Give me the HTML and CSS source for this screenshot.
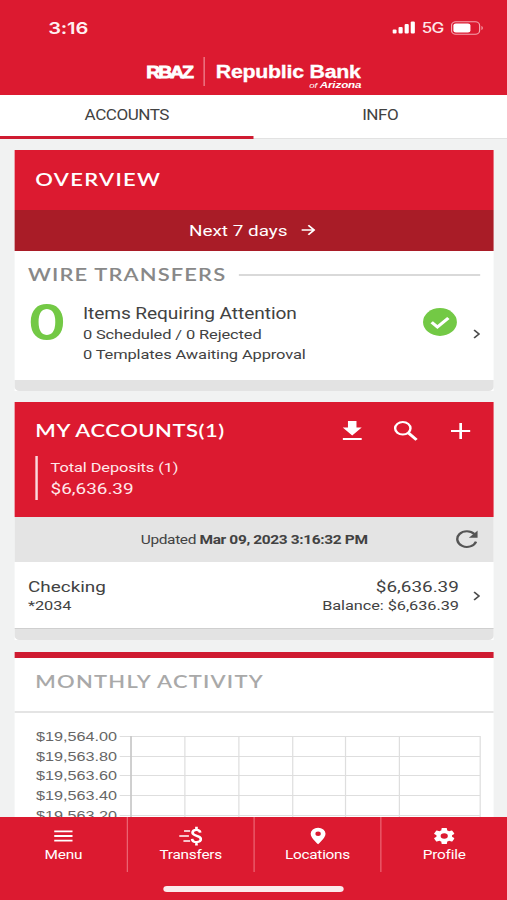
FILE: index.html
```html
<!DOCTYPE html>
<html lang="en">
<head>
<meta charset="utf-8">
<title>Republic Bank of Arizona</title>
<link rel="stylesheet" href="styles.css">
</head>
<body>
<div class="screen">
  <header class="top">
    <div class="status">
      <span class="time">3:16</span>
      <div class="status-right">
        <svg class="signal" width="19" height="13" viewBox="0 0 19 13"><rect x="0" y="8.5" width="3.4" height="4" rx="1"/><rect x="5" y="6" width="3.4" height="6.5" rx="1"/><rect x="10" y="3" width="3.4" height="9.5" rx="1"/><rect x="15" y="0.5" width="3.4" height="12" rx="1"/></svg>
        <span class="net">5G</span>
        <svg class="battery" width="27" height="14" viewBox="0 0 27 14"><rect x=".5" y=".8" width="23" height="12.4" rx="3.5" fill="none" stroke="#f4a5ae"/><rect x="2" y="2.5" width="14" height="9" rx="2" fill="#fff"/><path d="M25 5v4c1.500-.4 1.500-3.600 0-4z" fill="#f4a5ae"/></svg>
      </div>
    </div>
    <div class="brand">
      <span class="brand-short">RBAZ</span>
      <div class="brand-full">
        <span class="brand-name">Republic Bank</span>
        <span class="brand-sub"><small>of</small> Arizona</span>
      </div>
    </div>
  </header>
  <nav class="tabs">
    <a class="tab active">ACCOUNTS</a>
    <a class="tab">INFO</a>
  </nav>
  <main class="content">
    <section class="card">
      <h2 class="overview-title">OVERVIEW</h2>
      <div class="range"><span>Next 7 days</span>
        <svg width="12" height="12" viewBox="0 0 12 12" fill="none" stroke="#fff" stroke-width="1.600"><path d="M.5 6h10M6 1.300L10.700 6 6 10.700"/></svg>
      </div>
      <div class="wire">
        <div class="wire-head"><h3>WIRE TRANSFERS</h3><span class="rule"></span></div>
        <div class="wire-row">
          <span class="count">0</span>
          <div class="wire-text">
            <p class="lead">Items Requiring Attention</p>
            <p class="s1">0 Scheduled / 0 Rejected</p>
            <p class="s2">0 Templates Awaiting Approval</p>
          </div>
          <svg class="ok" width="28" height="28" viewBox="0 0 28 28"><circle cx="14" cy="14" r="13.900" fill="#73c945"/><path d="M7.200 14.300l4.700 4.700 9-9" fill="none" stroke="#fff" stroke-width="2.800"/></svg>
          <svg class="chev" width="6" height="10" viewBox="0 0 6 10"><path d="M1 1l4 4-4 4"/></svg>
        </div>
      </div>
      <div class="foot"></div>
    </section>

    <section class="card accounts">
      <div class="acc-head">
        <div class="acc-bar">
          <h2>MY ACCOUNTS(1)</h2>
          <svg class="i-down" width="16" height="20" viewBox="0 0 16 20" fill="#fff"><path d="M4.500 0h7v6.500h4.300L8 14.500.2 6.500h4.300zM.2 17h15.600v2H.2z"/></svg>
          <svg class="i-search" width="20" height="20" viewBox="0 0 20 20" fill="none" stroke="#fff"><circle cx="7.500" cy="7.300" r="6.300" stroke-width="2"/><path d="M12.200 12l6.600 6.800" stroke-width="2.600"/></svg>
          <svg class="i-plus" width="16" height="16" viewBox="0 0 16 16" stroke="#fff" stroke-width="2.200"><path d="M8 0v16M0 8h16"/></svg>
        </div>
        <div class="total"><p class="t1">Total Deposits (1)</p><p class="t2">$6,636.39</p></div>
      </div>
      <div class="updated"><span>Updated <b>Mar 09, 2023 3:16:32 PM</b></span>
        <svg class="i-refresh" width="18" height="18" viewBox="0 0 18 18"><path d="M15.200 4A7.900 7.900 0 1 0 16.600 11.600" fill="none" stroke="#555" stroke-width="2"/><path d="M18 .5v7.300h-7.300z" fill="#555"/></svg>
      </div>
      <div class="account">
        <div><p class="a1">Checking</p><p class="a2">*2034</p></div>
        <div class="amounts"><p class="a3">$6,636.39</p><p class="a4">Balance: $6,636.39</p></div>
        <svg class="chev" width="6" height="10" viewBox="0 0 6 10"><path d="M1 1l4 4-4 4"/></svg>
      </div>
      <div class="foot"></div>
    </section>

    <section class="card monthly">
      <h2>MONTHLY ACTIVITY</h2>
      <div class="chart">
        <div class="ticks"><span>$19,564.00</span><span>$19,563.80</span><span>$19,563.60</span><span>$19,563.40</span><span>$19,563.20</span></div>
        <svg class="grid" width="297" height="100" viewBox="0 0 297 100"><g stroke="#dedede" stroke-width="1"><path d="M0 .5h296.500M0 20.500h296.500M0 39.500h296.500M0 59.500h296.500M0 79.500h296.500M53.700 0v100M98 0v100M142.200 0v100M185.500 0v100M229.700 0v100M296 0v100"/></g><path d="M9.500 0v100" stroke="#c8c8c8" stroke-width="1.400"/></svg>
      </div>
    </section>
  </main>
  <nav class="bottom">
    <div class="items">
      <a><svg width="16" height="20" viewBox="0 0 16 20" stroke="#fff" stroke-width="1.800"><path d="M.5 5.300h15M.5 10h15M.5 14.700h15"/></svg><span>Menu</span></a>
      <a><svg width="19" height="20" viewBox="0 0 19 20" fill="none" stroke="#fff"><path d="M4 5h5M0 10h8M3.500 15h5.500" stroke-width="1.700"/><path d="M17.300 6.700C17 4.500 15.700 3.900 14.200 3.900c-2 0-3.200 1-3.200 2.800 0 3.800 6.800 2.500 6.800 6.400 0 1.900-1.500 3-3.500 3-2.200 0-3.500-1.100-3.700-3.300M14.200 .8v3.300M14.200 16v3.400" stroke-width="2.200"/></svg><span>Transfers</span></a>
      <a><svg width="14" height="20" viewBox="0 0 14 20" fill="#fff"><path fill-rule="evenodd" d="M7 1.700A6.100 6.100 0 0 0 .9 7.800C.9 12.100 7 18.300 7 18.300s6.100-6.200 6.100-10.500A6.100 6.100 0 0 0 7 1.700zm0 3.900a2.200 2.200 0 1 1 0 4.400 2.200 2.200 0 0 1 0-4.400z"/></svg><span>Locations</span></a>
      <a><svg width="17" height="20" viewBox="2.500 0 19 24" preserveAspectRatio="none" fill="#fff"><path d="M19.140 12.940c.04-.3.060-.61.060-.94s-.02-.64-.07-.94l2.030-1.580a.49.490 0 0 0 .12-.61l-1.920-3.320a.49.490 0 0 0-.59-.22l-2.390.96a7 7 0 0 0-1.620-.94l-.36-2.540a.48.480 0 0 0-.48-.41h-3.840a.48.480 0 0 0-.47.410l-.36 2.540a7.400 7.400 0 0 0-1.620.94l-2.390-.96a.48.480 0 0 0-.59.220L2.740 8.870a.48.480 0 0 0 .12.610l2.030 1.580a6 6 0 0 0 0 1.880l-2.030 1.580a.49.490 0 0 0-.12.610l1.920 3.320c.12.220.37.290.59.220l2.390-.96c.5.380 1.030.7 1.620.94l.36 2.540c.05.240.24.410.48.410h3.840c.24 0 .44-.17.470-.41l.36-2.540a7 7 0 0 0 1.620-.94l2.390.96c.22.080.47 0 .59-.22l1.920-3.320a.48.480 0 0 0-.12-.61zM12 15.300a3.300 3.300 0 1 1 0-6.600 3.300 3.300 0 0 1 0 6.600z"/></svg><span>Profile</span></a>
    </div>
    <div class="home"></div>
  </nav>
</div>
</body>
</html>
```
FILE: styles.css
```css
* { box-sizing: border-box; }
html, body { margin: 0; width: 507px; height: 900px; overflow: hidden; background: #f1f2f2; }
h2, h3, p { margin: 0; font-weight: inherit; }
svg { display: block; flex: none; }

/* The phone layout is 416 units wide, stretched to the full window width. */
.screen {
  width: 416px; height: 900px; transform: scaleX(1.21875); transform-origin: 0 0;
  display: flex; flex-direction: column; overflow: hidden;
  font-family: Roboto, "Liberation Sans", sans-serif; color: #424242; background: #f1f2f2;
  white-space: nowrap;
}

.top { height: 95px; flex: none; background: #dc1a30; color: #fff; }
.status { height: 55px; padding: 0 19px 0 39.500px; display: flex; align-items: center; justify-content: space-between; }
.time { font: 600 16.500px/20px Inter, sans-serif; letter-spacing: -.1px; color: #fff0f1; }
.status-right { display: flex; align-items: center; }
.signal { fill: #fff; }
.net { font: 500 14px/18px Inter, sans-serif; margin: 1px 6px 0 5px; letter-spacing: -.6px; color: #fde8ea; }
.brand { display: flex; height: 40px; padding: 2px 0 0 120px; font-family: "Liberation Sans", sans-serif; font-weight: 700; }
.brand-short { font-size: 16px; line-height: 32px; width: 48px; height: 29px; border-right: 1px solid #f08a95; letter-spacing: -1.800px; -webkit-text-stroke: .8px #fff; }
.brand-full { width: 119.500px; margin-left: 9px; display: flex; flex-direction: column; }
.brand-name { font-size: 17.500px; line-height: 30px; letter-spacing: -.2px; -webkit-text-stroke: .3px #fff; }
.brand-sub { font-size: 9.500px; line-height: 10px; font-style: italic; text-align: right; margin-top: -7px; letter-spacing: -.1px; }
.brand-sub small { font-size: 8px; font-weight: 400; }

.tabs { height: 44px; flex: none; display: flex; background: #fff; border-bottom: 1px solid #e2e2e2; }
.tab { flex: 1; height: 44px; text-align: center; font-size: 14px; line-height: 41px; border-bottom: 3px solid transparent; letter-spacing: -.4px; }
.tab.active { border-color: #cf1b31; }

.content { flex: 1; min-height: 0; overflow: hidden; padding: 11px 11.500px 0; display: flex; flex-direction: column; gap: 11px; }
.card { background: #fff; flex: none; }
h2, h3 { font-family: Lato, sans-serif; font-weight: 600; }
.overview-title { height: 60px; padding-left: 17.500px; background: #dc1a30; color: #fff; font-size: 18px; line-height: 59px; letter-spacing: 1.100px; }
.range { height: 41px; background: #a91c27; color: #fff; display: flex; align-items: center; justify-content: center; gap: 11px; font-size: 15.500px; padding-right: 2px; }
.range svg { position: relative; top: -1px; }
.wire { height: 129px; padding: 12px 11px 0 11.500px; }
.wire-head { display: flex; align-items: center; gap: 10px; height: 24px; color: #888; }
.wire-head h3 { font-size: 18px; line-height: 24px; letter-spacing: .93px; position: relative; top: -1px; }
.rule { flex: 1; height: 2.500px; background: #d9d9d9; }
.wire-row { display: flex; align-items: flex-start; padding-top: 16px; }
.count { width: 45px; font: 700 50px/36px Lato, sans-serif; color: #73c945; padding-left: 1px; }
.wire-text { flex: 1; }
.lead { font-size: 15.700px; line-height: 20px; margin-top: 1px; letter-spacing: -.07px; }
.s1, .s2 { font-size: 13.500px; line-height: 20px; letter-spacing: -.1px; }
.ok { margin: 5px 13px 0 0; }
.chev { fill: none; stroke: #4c4c4c; stroke-width: 1.500px; }
.wire-row .chev { margin-top: 26px; }
.foot { height: 11px; background: #e3e3e3; border-radius: 0 0 4px 4px; }

.acc-head { height: 115px; background: #dc1a30; color: #fff; padding: 0 19px 0 17.500px; }
.acc-bar { display: flex; align-items: center; height: 58px; }
.acc-bar h2 { flex: 1; font-size: 18px; letter-spacing: .45px; position: relative; top: -1px; }
.i-search { margin: 0 26.500px 0 26px; }
.total { height: 44px; margin-top: -4px; border-left: 2px solid #fbdade; padding-left: 10.500px; color: #ffe9eb; }
.t1 { font-size: 13.400px; line-height: 23px; letter-spacing: -.05px; }
.t2 { font-size: 15.500px; line-height: 20px; }
.updated { height: 45px; background: #e4e4e4; display: flex; align-items: center; padding: 0 13px 0 104px; justify-content: space-between; font-size: 12.700px; letter-spacing: -.3px; }
.i-refresh { position: relative; top: -1px; }
.account { height: 67px; padding: 15px 11px 0 11.500px; display: flex; border-bottom: 1px solid #cfcfcf; }
.amounts { margin-left: auto; text-align: right; }
.a1, .a3 { font-size: 15.500px; line-height: 20px; }
.a2, .a4 { font-size: 13.400px; line-height: 17px; letter-spacing: -.05px; }
.account .chev { margin: 14px 0 0 11px; }

.monthly { border-top: 6px solid #cf1b31; margin-top: 1px; }
.monthly h2 { height: 55px; padding-left: 17.500px; border-bottom: 2px solid #e4e4e4; color: #a9a9a9; font-size: 18px; line-height: 46px; letter-spacing: 1px; }
.chart { display: flex; height: 130px; padding: 14px 0 0 18px; }
.ticks { width: 66.500px; display: flex; flex-direction: column; font: 13.300px/19.700px "Liberation Sans", sans-serif; color: #666; }
.grid { margin: 9px 0 0 2px; }

.bottom { height: 83px; flex: none; background: #dc1a30; color: #fff; }
.items { display: grid; grid-template-columns: repeat(4, 1fr); height: 55px; }
.items a { display: flex; flex-direction: column; align-items: center; padding-top: 9px; font-size: 12.600px; line-height: 18px; letter-spacing: -.2px; border-left: 1px solid #ec6674; }
.items a:first-child { border-left: 0; }
.home { width: 148px; height: 5.500px; margin: 14px auto 0; border-radius: 3px; background: #fbeaec; }
```
